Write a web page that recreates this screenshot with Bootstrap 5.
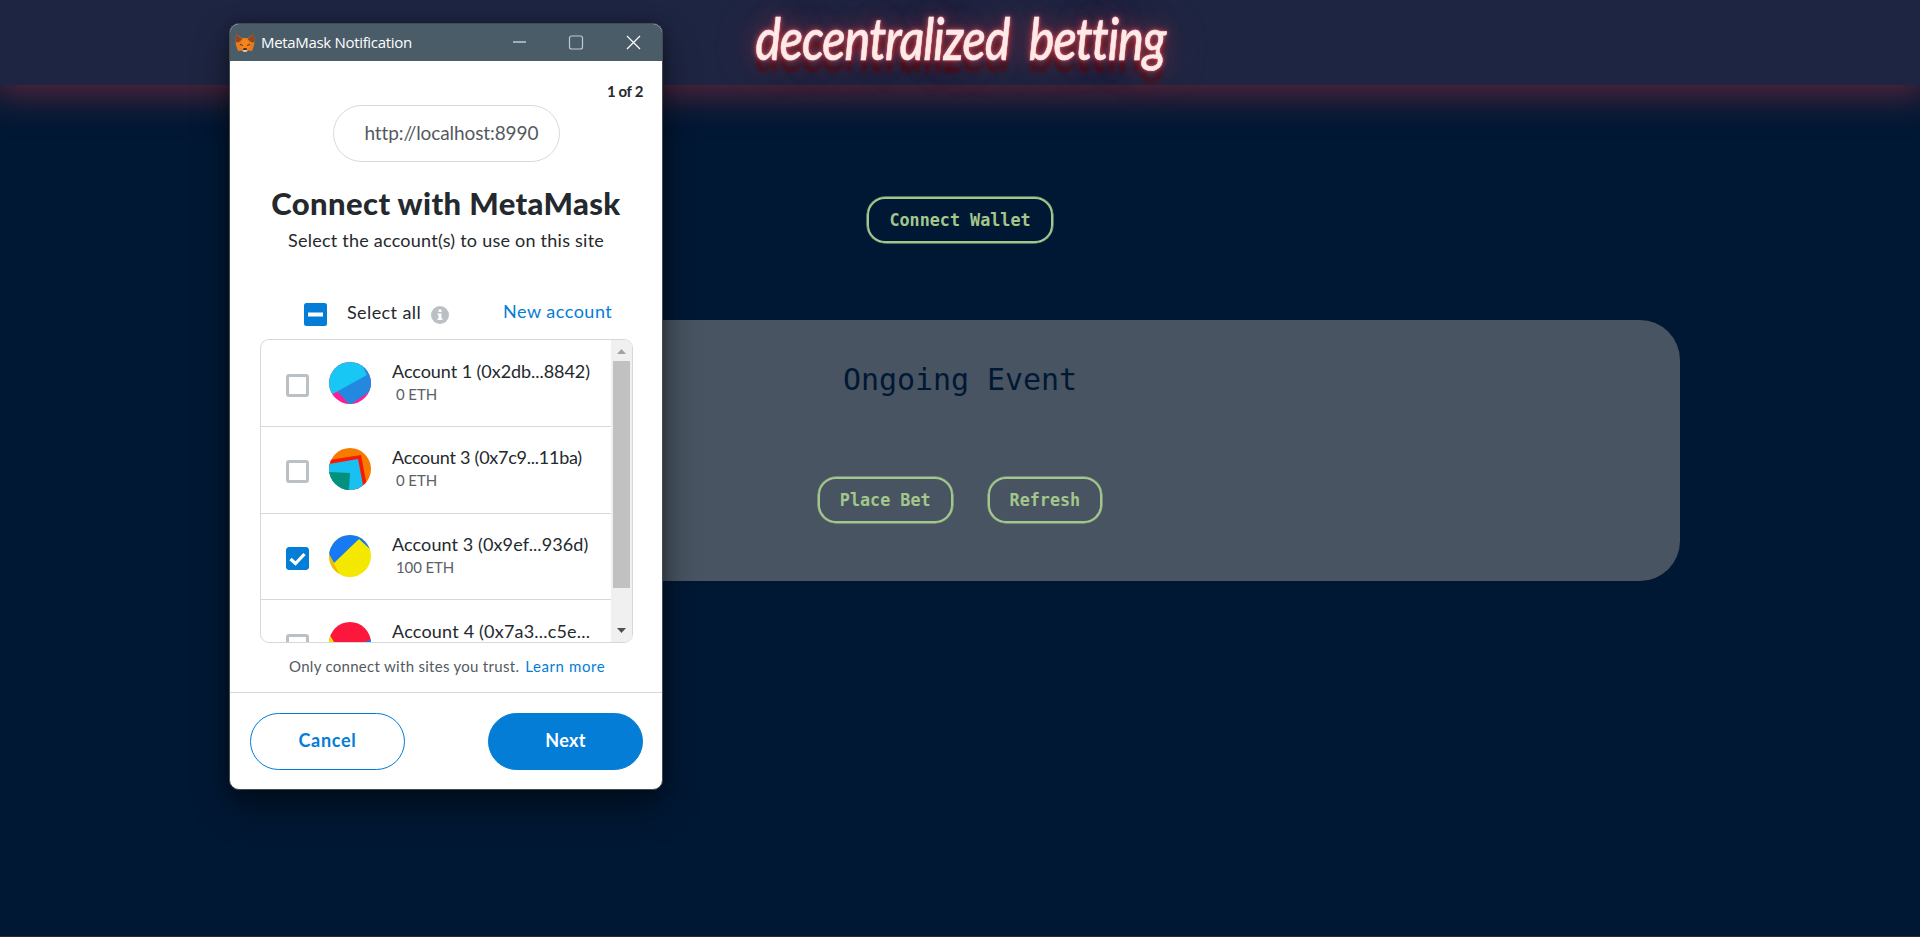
<!DOCTYPE html>
<html lang="en">
<head>
<meta charset="utf-8">
<meta name="viewport" content="width=device-width, initial-scale=1">
<title>decentralized betting</title>
<link href="https://cdn.jsdelivr.net/npm/bootstrap@5.3.0/dist/css/bootstrap.min.css" rel="stylesheet">
<style>
body{background:#011835;height:100vh;overflow:hidden;font-family:"DejaVu Sans Mono",monospace;border-bottom:1px solid #25302f}
.site-header{height:85px;background:#1e2542;box-shadow:0 0 38px 8px rgba(195,55,65,.5)}
.neon{font:italic 500 57px/85px Lato,sans-serif;color:#ffeaea;white-space:nowrap;transform:scaleX(.85);letter-spacing:-1.3px;word-spacing:11px;margin:-4px 0 0;-webkit-text-stroke:.5px #ffeaea;
text-shadow:0 0 3px #f07078,0 0 8px rgba(220,70,80,.8),0 0 24px rgba(190,60,75,.6),0 0 50px rgba(180,70,90,.45),0 12px 4px #401018}
.site-main{padding-top:111px}
.btn-bet{--bs-btn-color:#a3c78b;--bs-btn-border-color:#a3c78b;--bs-btn-border-width:2px;--bs-btn-border-radius:18px;--bs-btn-padding-x:20px;--bs-btn-padding-y:0;--bs-btn-box-shadow:none;box-shadow:0 0 0 .5px #a3c78b;height:46px;margin-top:1px;font:bold 16.75px/22px "DejaVu Sans Mono",monospace;white-space:nowrap}
.event-card{width:1440px;height:261px;margin-top:77px;border-radius:40px;background:#485462;color:#011835;padding-top:40px}
.event-card h2{font:30px/40px "DejaVu Sans Mono",monospace;letter-spacing:-.05px;margin-bottom:76px}
.bet-actions{gap:35px}
.mm{position:absolute;left:229px;top:23px;width:434px;height:767px;border:1px solid #444c50;border-radius:10px;background:#fff;box-shadow:0 18px 36px rgba(0,0,0,.45),0 0 12px rgba(0,0,0,.25);font-family:Lato,sans-serif;color:#24292e}
.mm-bar{height:37px;background:#4b5c69;color:#fff;padding-left:5px}
.mm-bar .ttl{font:15px/37px "Open Sans",sans-serif;margin-left:6px;letter-spacing:-.32px}
.mm-step{font-size:15px;font-weight:700;line-height:20px;letter-spacing:-.35px;margin:20px 19px 4px;text-align:right}
.mm-pill{width:227px;height:57px;border:1px solid #d6d9dc;border-radius:29px;color:#535a61;font-size:19px;letter-spacing:-.1px;padding-left:31px}
.mm-title{font-size:31px;font-weight:900;line-height:40px;letter-spacing:.38px;margin:21px 0 0}
.mm-sub{font-size:18px;line-height:26px;letter-spacing:.24px;margin:4px 0 0}
.mm-sel{height:50px;margin-top:36px;padding-left:74px;font-size:18px}
.mm-sel svg{margin-top:1px}
.mm-sel .all{margin:-3px 10px 0 20px;letter-spacing:.4px}
.mm-sel .new{margin:-6px 0 0 54px;letter-spacing:.5px}
.blue{color:#037dd6}
.mm-list{width:373px;height:304px;margin-left:30px;border:1px solid #d6d9dc;border-radius:9px}
.acct{height:87px;border-bottom:1px solid #d6d9dc;padding-left:25px}
.acct+.acct{height:86.67px}
.acct .box{flex:none;width:23px;height:23px;border:3px solid #bbc0c5;border-radius:3px;margin-top:4px}
.acct .av{margin:-1px 21px 0 20px;flex:none}
.acct .tx{margin-top:-2px}
.acct .nm{font-size:18px;line-height:22px;white-space:nowrap}
.acct .bal{font-size:15px;line-height:22px;color:#5b6168;margin:1px 0 0 4px;letter-spacing:-.1px}
.s1{letter-spacing:-.05px}.s2{letter-spacing:-.25px}.s3{letter-spacing:.1px}.s4{letter-spacing:.2px}
.mm-track{width:21px;background:#f0f0f0}
.mm-thumb{height:227px;width:17px;background:#c1c1c1}
.mm-note{font-size:15px;line-height:22px;letter-spacing:.29px;color:#535a61;margin-top:12px;padding-left:59px}
.mm-note .blue{margin-left:6px;letter-spacing:.6px}
.mm-foot{border-top:1px solid #d6d9dc;height:97px;padding:20px 19px 0 20px;margin-top:15px}
.mm-btn{--bs-btn-border-radius:29px;width:155px;height:57px;font-size:18px;font-weight:700;letter-spacing:.3px;padding-bottom:9px}
.mm-btn.btn-outline-primary{--bs-btn-color:#037dd6;--bs-btn-border-color:#037dd6;letter-spacing:.7px}
.mm-btn.btn-primary{--bs-btn-bg:#037dd6;--bs-btn-border-color:#037dd6}
</style>
</head>
<body>
<header class="site-header d-flex justify-content-center"><h1 class="neon">decentralized betting</h1></header>
<main class="site-main d-flex flex-column align-items-center">
<button class="btn btn-bet">Connect Wallet</button>
<section class="event-card text-center">
<h2>Ongoing Event</h2>
<div class="bet-actions d-flex justify-content-center"><button class="btn btn-bet">Place Bet</button><button class="btn btn-bet">Refresh</button></div>
</section>
</main>

<div class="mm overflow-hidden" role="dialog">
<div class="mm-bar d-flex align-items-center">
<svg width="20" height="20" viewBox="0 0 20 20"><path fill="#e8791f" d="M1 1l6 4h6l6-4 .5 9-1 4-1.500 4-3.500-.5-2 1.500H8.500l-2-1.500-3.500.5L1.500 14l-1-4z"/><path fill="#8d4a20" d="M1 1l6.500 5L4 9l-3.500.5zM19 1l-6.500 5L16 9l3.500.5z"/><path fill="#f6851b" d="M8 6h4l3 8-3 3H8l-3-3z"/><path fill="#47342c" d="M5 11l3 1v1l-3-1zM15 11l-3 1v1l3-1zM8.500 15h3l.5 2H8z"/><path fill="#d8c9bd" d="M7.500 17h5l-1.500 2H9z"/></svg>
<span class="ttl">MetaMask Notification</span>
<svg class="ms-auto me-2" width="141" height="20" viewBox="0 0 141 20" fill="none" stroke="#fff" stroke-width="1.200"><path d="M0 9h13"/><rect x="56.500" y="3" width="13" height="13" rx="2" stroke="#c3cace"/><path d="M114 3l13 13M127 3l-13 13"/></svg>
</div>
<div class="mm-step">1 of 2</div>
<div class="mm-pill d-flex align-items-center mx-auto">http://localhost:8990</div>
<h2 class="mm-title text-center">Connect with MetaMask</h2>
<p class="mm-sub text-center">Select the account(s) to use on this site</p>
<div class="mm-sel d-flex align-items-center">
<svg width="23" height="23" viewBox="0 0 23 23"><rect width="23" height="23" rx="2.500" fill="#037dd6"/><path fill="#fff" d="M4 9.500h15v4H4z"/></svg>
<span class="all">Select all</span>
<svg width="18" height="18" viewBox="0 0 18 18"><circle cx="9" cy="9" r="9" fill="#bbc0c5"/><path fill="#fff" d="M7.500 3.500h3v2.500h-3zM6.500 7.500h4v5h1v1.500h-5v-1.500h1v-3.500h-1z"/></svg>
<span class="new blue">New account</span>
</div>
<div class="mm-list d-flex overflow-hidden">
<div class="flex-grow-1">
<div class="acct d-flex align-items-center"><i class="box"></i><svg class="av" width="42" height="42" viewBox="0 0 42 42"><clipPath id="c"><circle cx="21" cy="21" r="21"/></clipPath><g clip-path="url(#c)"><path fill="#fc1f94" d="M0 0h42v42H0z"/><path fill="#2389e0" d="M8 29L38 8l6 19-23 16z"/><path fill="#18c7f3" d="M0 0h35l3 13L0 34z"/><path fill="#2389e0" d="M33 3h9v18l-4-8z"/></g></svg><div class="tx"><div class="nm s1">Account 1 (0x2db...8842)</div><div class="bal">0 ETH</div></div></div>
<div class="acct d-flex align-items-center"><i class="box"></i><svg class="av" width="42" height="42" viewBox="0 0 42 42"><g clip-path="url(#c)"><path fill="#f57c00" d="M0 0h42v42H0z"/><path fill="#fb1803" d="M0 12l32-5 6 31-10 4L0 20z"/><path fill="#19c0f2" d="M0 16l29-5 6 31H0z"/><path fill="#03907c" d="M0 24l21 1-1 17H0z"/></g></svg><div class="tx"><div class="nm s2">Account 3 (0x7c9...11ba)</div><div class="bal">0 ETH</div></div></div>
<div class="acct d-flex align-items-center"><svg class="box border-0" viewBox="0 0 23 23"><rect width="23" height="23" rx="2.500" fill="#037dd6"/><path d="M4.500 12l5 4.500 9-9.500" fill="none" stroke="#fff" stroke-width="3.200"/></svg><svg class="av" width="42" height="42" viewBox="0 0 42 42"><g clip-path="url(#c)"><path fill="#f5e800" d="M0 0h42v42H0z"/><path fill="#187af2" d="M0 0h42v15L30 4 5 28l-5-9z"/><path fill="#f5b800" d="M0 20l12 22H0z"/></g></svg><div class="tx"><div class="nm s3">Account 3 (0x9ef...936d)</div><div class="bal">100 ETH</div></div></div>
<div class="acct d-flex align-items-center"><i class="box"></i><svg class="av" width="42" height="42" viewBox="0 0 42 42"><g clip-path="url(#c)"><path fill="#fb183c" d="M0 0h42v42H0z"/><path fill="#f5e800" d="M0 12l5 8v22H0z"/><path fill="#187af2" d="M36 20l6-3v25z"/></g></svg><div class="tx"><div class="nm s4">Account 4 (0x7a3...c5e...</div><div class="bal">&nbsp;</div></div></div>
</div>
<div class="mm-track d-flex flex-column align-items-center flex-shrink-0">
<svg width="21" height="21" viewBox="0 0 21 21"><path fill="#a3a3a3" d="M6 14l4.500-5 4.500 5z"/></svg>
<div class="mm-thumb"></div>
<svg class="mt-auto" width="21" height="21" viewBox="0 0 21 21"><path fill="#505050" d="M6 7l4.500 5L15 7z"/></svg>
</div>
</div>
<div class="mm-note">Only connect with sites you trust.<span class="blue">Learn more</span></div>
<div class="mm-foot d-flex justify-content-between align-items-start">
<button class="btn btn-outline-primary mm-btn">Cancel</button>
<button class="btn btn-primary mm-btn">Next</button>
</div>
</div>
<script src="https://cdn.jsdelivr.net/npm/bootstrap@5.3.0/dist/js/bootstrap.bundle.min.js"></script>
</body>
</html>
